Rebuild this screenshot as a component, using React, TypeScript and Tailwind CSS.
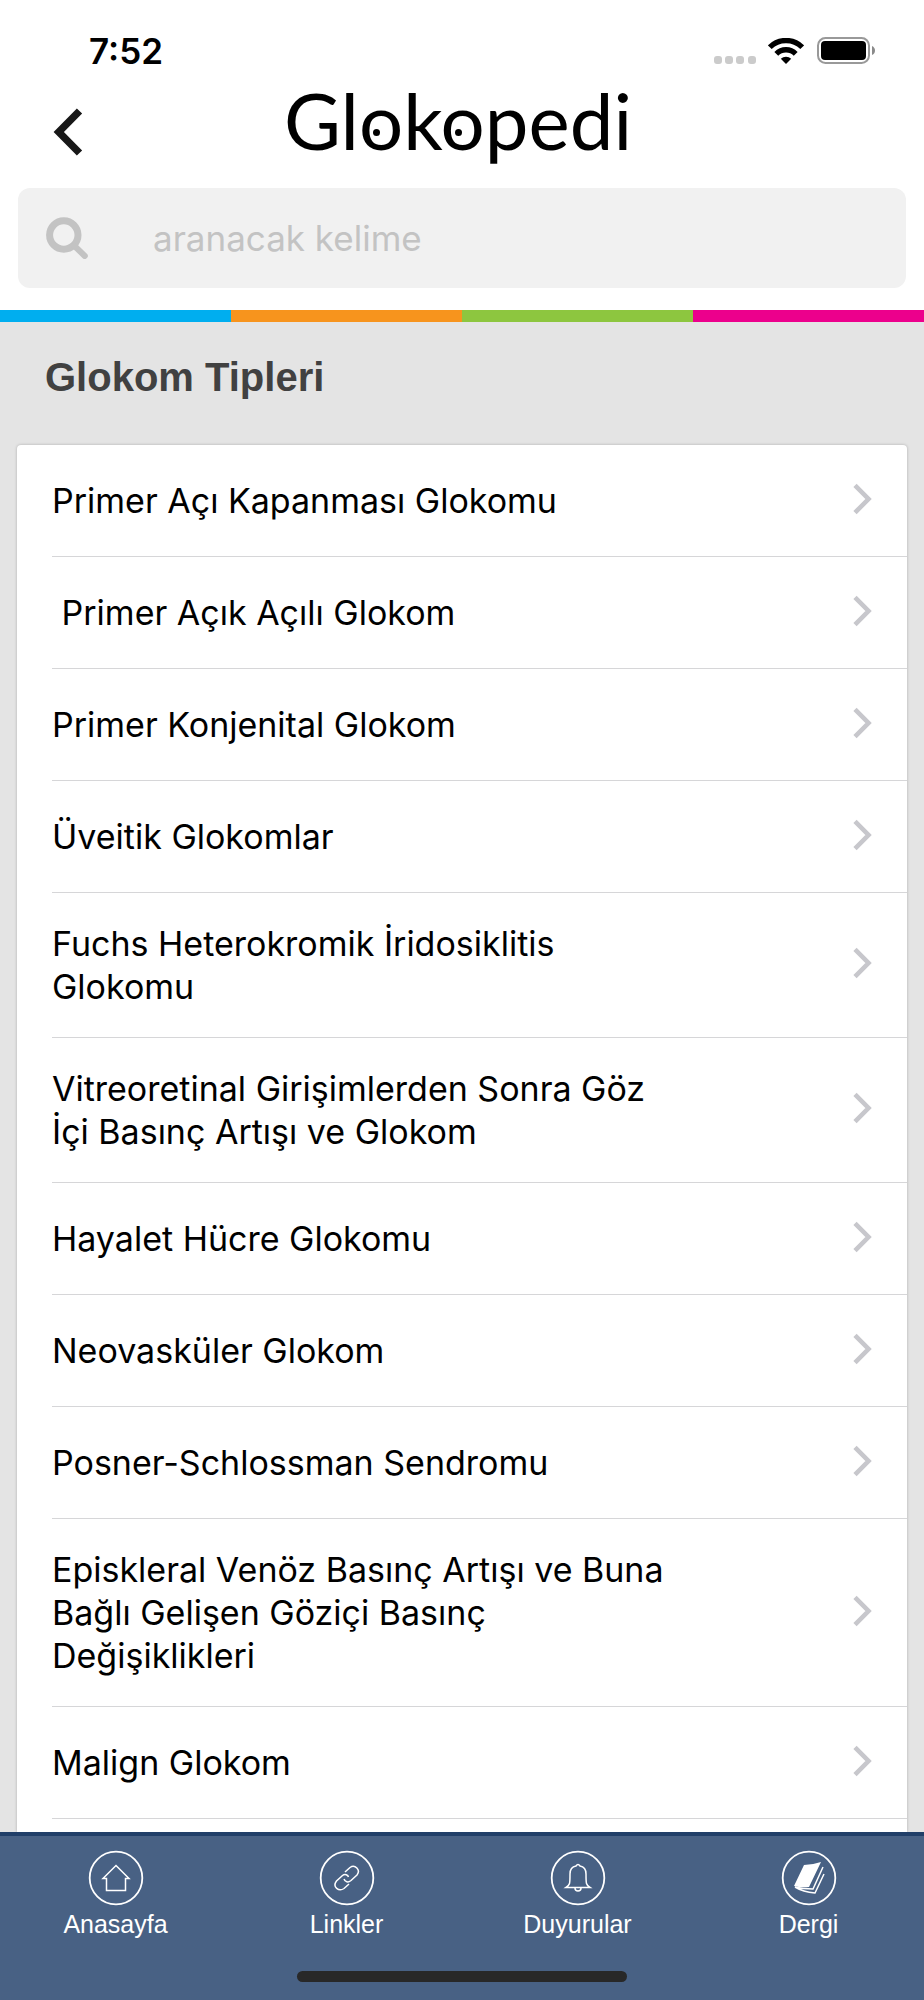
import type { ReactNode } from "react";

const glaucomaTypes = [
  "Primer Açı Kapanması Glokomu",
  "\u00a0Primer Açık Açılı Glokom",
  "Primer Konjenital Glokom",
  "Üveitik Glokomlar",
  "Fuchs Heterokromik İridosiklitis Glokomu",
  "Vitreoretinal Girişimlerden Sonra Göz İçi Basınç Artışı ve Glokom",
  "Hayalet Hücre Glokomu",
  "Neovasküler Glokom",
  "Posner-Schlossman Sendromu",
  "Episkleral Venöz Basınç Artışı ve Buna Bağlı Gelişen Göziçi Basınç Değişiklikleri",
  "Malign Glokom",
];

function StatusBar() {
  return (
    <div className="flex h-[88px] items-start justify-between pt-8 pr-12 pl-[89px]">
      <span className="text-[35px] leading-[38px] font-semibold">7:52</span>
      <div className="flex h-[38px] items-center gap-3">
        <svg width="42" height="27" viewBox="0 0 42 27" fill="#cbcbcb" aria-hidden="true">
          <rect x="0" y="18" width="8" height="8" rx="3" />
          <rect x="11" y="18" width="8" height="8" rx="3" />
          <rect x="22" y="18" width="8" height="8" rx="3" />
          <rect x="34" y="18" width="8" height="8" rx="3" />
        </svg>
        <svg width="36" height="27" viewBox="0 0 36 27" aria-hidden="true">
          <g fill="none" stroke="#000" strokeWidth="5.4">
            <path d="M1.8 9.2A23 23 0 0 1 34.2 9.2" />
            <path d="M8.3 15.8A13.6 13.6 0 0 1 27.7 15.8" />
          </g>
          <path d="M18 26L12.8 20.8A7.5 7.5 0 0 1 23.2 20.8Z" />
        </svg>
        <svg width="60" height="28" viewBox="0 0 60 28" aria-hidden="true">
          <rect x="2" y="1" width="51" height="25" rx="7.5" fill="none" stroke="#999" strokeWidth="2" />
          <rect x="5" y="4" width="45" height="19" rx="4" />
          <path d="M56 9Q59 10.5 59 13.5T56 18Z" fill="#8a8a8a" />
        </svg>
      </div>
    </div>
  );
}

// The "o" of the logo, with its pupil
function EyeLetter() {
  return (
    <span className="relative">
      o
      <i className="absolute top-[56px] left-[14px] size-[7px] rounded-full bg-black" />
    </span>
  );
}

function Header() {
  return (
    <header className="bg-white">
      <StatusBar />
      <div className="grid h-[100px] grid-cols-[1fr_auto_1fr] items-start">
        <button type="button" aria-label="Geri" className="ml-[53px] flex h-[88px] w-8 items-center">
          <svg width="30" height="48" viewBox="0 0 30 48" fill="none" stroke="#181818" strokeWidth="7.4">
            <path d="M26.500 3L5.800 24L26.500 45" />
          </svg>
        </button>
        <h1 className="pr-2 font-['Lato',sans-serif] text-[78px] leading-16">
          Gl
          <EyeLetter />k<EyeLetter />
          pedi
        </h1>
      </div>
      <div className="px-[18px] pb-[22px]">
        <label className="flex h-[100px] items-center rounded-xl bg-[#f1f1f1] pl-7">
          <svg width="42" height="42" viewBox="0 0 42 42" fill="none" stroke="#c3c3c3" aria-hidden="true">
            <circle cx="17.800" cy="18" r="14.200" strokeWidth="7" />
            <path d="M28 28.500L38.800 39" strokeWidth="6" strokeLinecap="round" />
          </svg>
          <input
            type="search"
            aria-label="Ara"
            placeholder="aranacak kelime"
            className="ml-[65px] min-w-0 flex-1 bg-transparent text-[35px] outline-none placeholder:text-[#c3c3c3]"
          />
        </label>
      </div>
      <div className="grid h-3 grid-cols-4">
        <span className="bg-[#00aeef]" />
        <span className="bg-[#f7941d]" />
        <span className="bg-[#8dc63f]" />
        <span className="bg-[#ec008c]" />
      </div>
    </header>
  );
}

function TypeRow({ title }: { title: string }) {
  return (
    <li className="pl-[35px]">
      <a
        href="#"
        className="flex min-h-28 items-center justify-between border-b border-[#d6d6d8] py-[29px] pr-[35px]"
      >
        <span className="max-w-[630px] text-[34px] leading-[43px]">{title}</span>
        <svg
          className="mb-1 shrink-0"
          width="20"
          height="32"
          viewBox="0 0 20 32"
          fill="none"
          stroke="#c7c7cc"
          strokeWidth="4.6"
          aria-hidden="true"
        >
          <path d="M3 2.400L16.500 16L3 29.600" />
        </svg>
      </a>
    </li>
  );
}

function NavItem({ label, children }: { label: string; children: ReactNode }) {
  return (
    <a href="#" className="flex flex-col items-center gap-0.5">
      <svg width="56" height="56" viewBox="0 0 56 56" fill="none" stroke="#fff" strokeWidth="1.500" aria-hidden="true">
        <circle cx="28" cy="28" r="26.300" strokeWidth="1.800" />
        {children}
      </svg>
      <span className="font-['Liberation_Sans',sans-serif] text-[25px] leading-8">{label}</span>
    </a>
  );
}

function TabBar() {
  return (
    <nav className="border-t-4 border-[#213f68] bg-[#486184] text-white">
      <div className="grid grid-cols-4 pt-[14px]">
        <NavItem label="Anasayfa">
          <path d="M28 15.500L41 28.500H37.500V40.500H18.500V28.500H15Z" />
        </NavItem>
        <NavItem label="Linkler">
          <path d="M26 22L31 17.500C36 14 42 20 38 25L32 30.500C29 33 26 32 25 29" />
          <path d="M30 34L25 38.500C20 42 13 37 17.500 31L23.500 25.500C26 23.500 29 25 29.500 27" />
        </NavItem>
        <NavItem label="Duyurular">
          <path d="M16 37.500C20 35 20 34 20 24Q20 17 26 16Q28 13 30 16Q36 17 36 24C36 34 36 35 40 37.500Z" />
          <path d="M25 38Q25 41 28 41T31 38" />
        </NavItem>
        <NavItem label="Dergi">
          <path d="M23 15Q31 15 40 12L28 37Q20 38 13 36Z" fill="#fff" stroke="none" />
          <path d="M42 17L32 39Q22 39 14 37M43 24L34 43Q22 42 14 37" />
        </NavItem>
      </div>
      <div className="flex justify-center pt-[31px] pb-[18px]">
        <span className="h-[11px] w-[330px] rounded-full bg-[#282828]" />
      </div>
    </nav>
  );
}

export default function App() {
  return (
    <div className="flex h-screen flex-col overflow-hidden bg-[#e4e4e4] font-['Inter',sans-serif] text-black">
      <Header />
      <main className="flex min-h-0 flex-1 flex-col">
        <h2 className="px-[45px] pt-8 pb-[45px] font-['Liberation_Sans',sans-serif] text-[40px] leading-[46px] font-bold text-[#414141]">
          Glokom Tipleri
        </h2>
        <ul className="mx-[17px] min-h-0 flex-1 overflow-hidden rounded-t bg-white shadow-[0_0_3px_rgba(0,0,0,0.25)]">
          {glaucomaTypes.map((title) => (
            <TypeRow key={title} title={title} />
          ))}
        </ul>
      </main>
      <TabBar />
    </div>
  );
}
